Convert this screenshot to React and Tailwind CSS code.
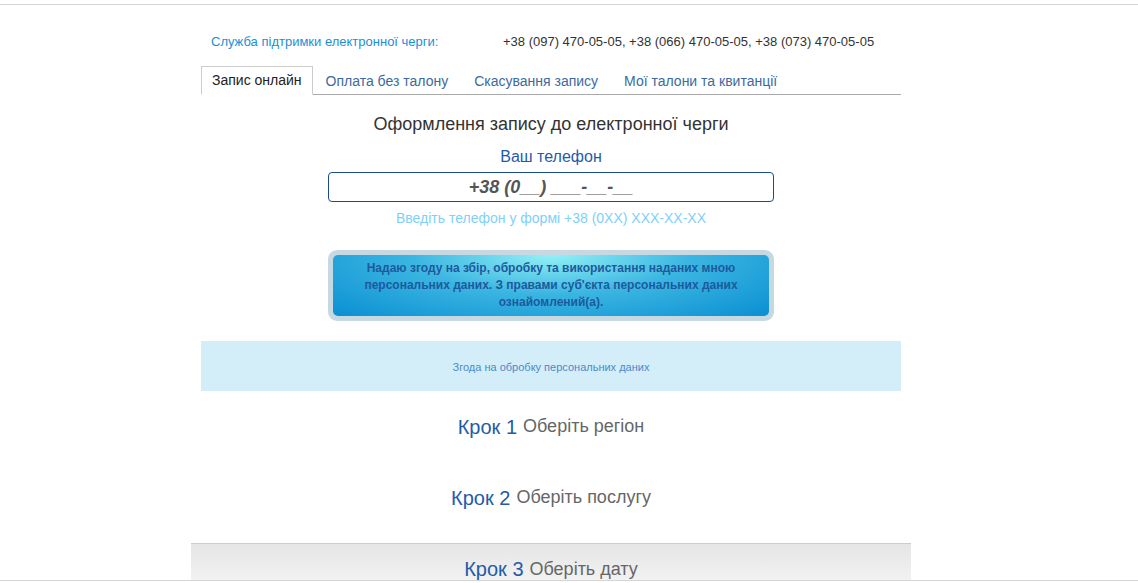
export default function App() {
  const tabs = ["Оплата без талону", "Скасування запису", "Мої талони та квитанції"];

  return (
    <div className="min-h-[583px] bg-white font-['Liberation_Sans',Arial,sans-serif] flex flex-col">
      <div className="mt-[4px] border-t border-[#d4d4d4]" />

      <div className="ml-[201px] w-[700px]">
        <div className="mt-[29px] flex items-center text-[13px] leading-[15px]">
          <span className="ml-[10px] w-[292px] text-[#1a8fd8]">Служба підтримки електронної черги:</span>
          <span className="text-[#333]">+38 (097) 470-05-05, +38 (066) 470-05-05, +38 (073) 470-05-05</span>
        </div>

        <div className="mt-[17px] flex items-end border-b border-[#aaa] text-[14px] leading-[18px]">
          <div className="-mb-px border border-b-white border-[#ccc] bg-white px-[10px] pt-[4px] pb-[5px] text-[#222]">
            Запис онлайн
          </div>
          {tabs.map((t) => (
            <div key={t} className="px-[13px] pt-[4px] pb-[4px] text-[#3b6aa0]">
              {t}
            </div>
          ))}
        </div>

        <div className="flex flex-col items-center">
          <h1 className="mt-[18px] text-[18px] leading-[22px] text-[#333]">
            Оформлення запису до електронної черги
          </h1>
          <div className="mt-[12px] text-[16px] leading-[20px] text-[#1f5ca8]">Ваш телефон</div>
          <div className="mt-[5px] flex h-[30px] w-[446px] items-center justify-center rounded-[4px] border border-[#1a4d8f] text-[18px] font-bold italic text-[#555]">
            +38 (0__) ___-__-__
          </div>
          <div className="mt-[7px] text-[14px] leading-[18px] text-[#7fd0f9]">
            Введіть телефон у формі +38 (0XX) XXX-XX-XX
          </div>

          <div className="mt-[23px] w-[446px] rounded-[9px] bg-[#c6d9e3] p-[5px]">
            <div className="rounded-[5px] bg-[radial-gradient(ellipse_at_50%_0%,#93f1f6_0%,#3bb6e2_45%,#0a8fd2_100%)] px-[20px] pt-[5px] pb-[5px] text-center text-[12px] font-bold leading-[17px] text-[#1d5a9c]">
              Надаю згоду на збір, обробку та використання наданих мною персональних даних. З правами суб'єкта персональних даних ознайомлений(а).
            </div>
          </div>
        </div>

        <div className="mt-[20px] flex h-[50px] items-center justify-center pt-[2px] bg-[#d4eef9] text-[11px] text-[#4a8ac8]">
          Згода на обробку персональних даних
        </div>

        <div className="flex h-[71px] items-center justify-center">
          <span className="text-[20px] text-[#1f5ca8]">Крок 1</span>
          <span className="ml-[6px] text-[18px] text-[#666]">Оберіть регіон</span>
        </div>
        <div className="flex h-[81px] items-center justify-center pb-[10px]">
          <span className="text-[20px] text-[#1f5ca8]">Крок 2</span>
          <span className="ml-[6px] text-[18px] text-[#666]">Оберіть послугу</span>
        </div>
      </div>

      <div className="ml-[191px] w-[720px] border-t border-[#ccc] bg-gradient-to-b from-[#e5e5e5] to-[#f2f2f2] h-[37px] flex items-end justify-center">
        <span className="text-[20px] leading-[22px] text-[#1f5ca8]">Крок 3</span>
        <span className="ml-[6px] text-[18px] leading-[22px] text-[#666]">Оберіть дату</span>
      </div>
      <div className="border-t border-[#d4d4d4] h-[3px]" />
    </div>
  );
}
